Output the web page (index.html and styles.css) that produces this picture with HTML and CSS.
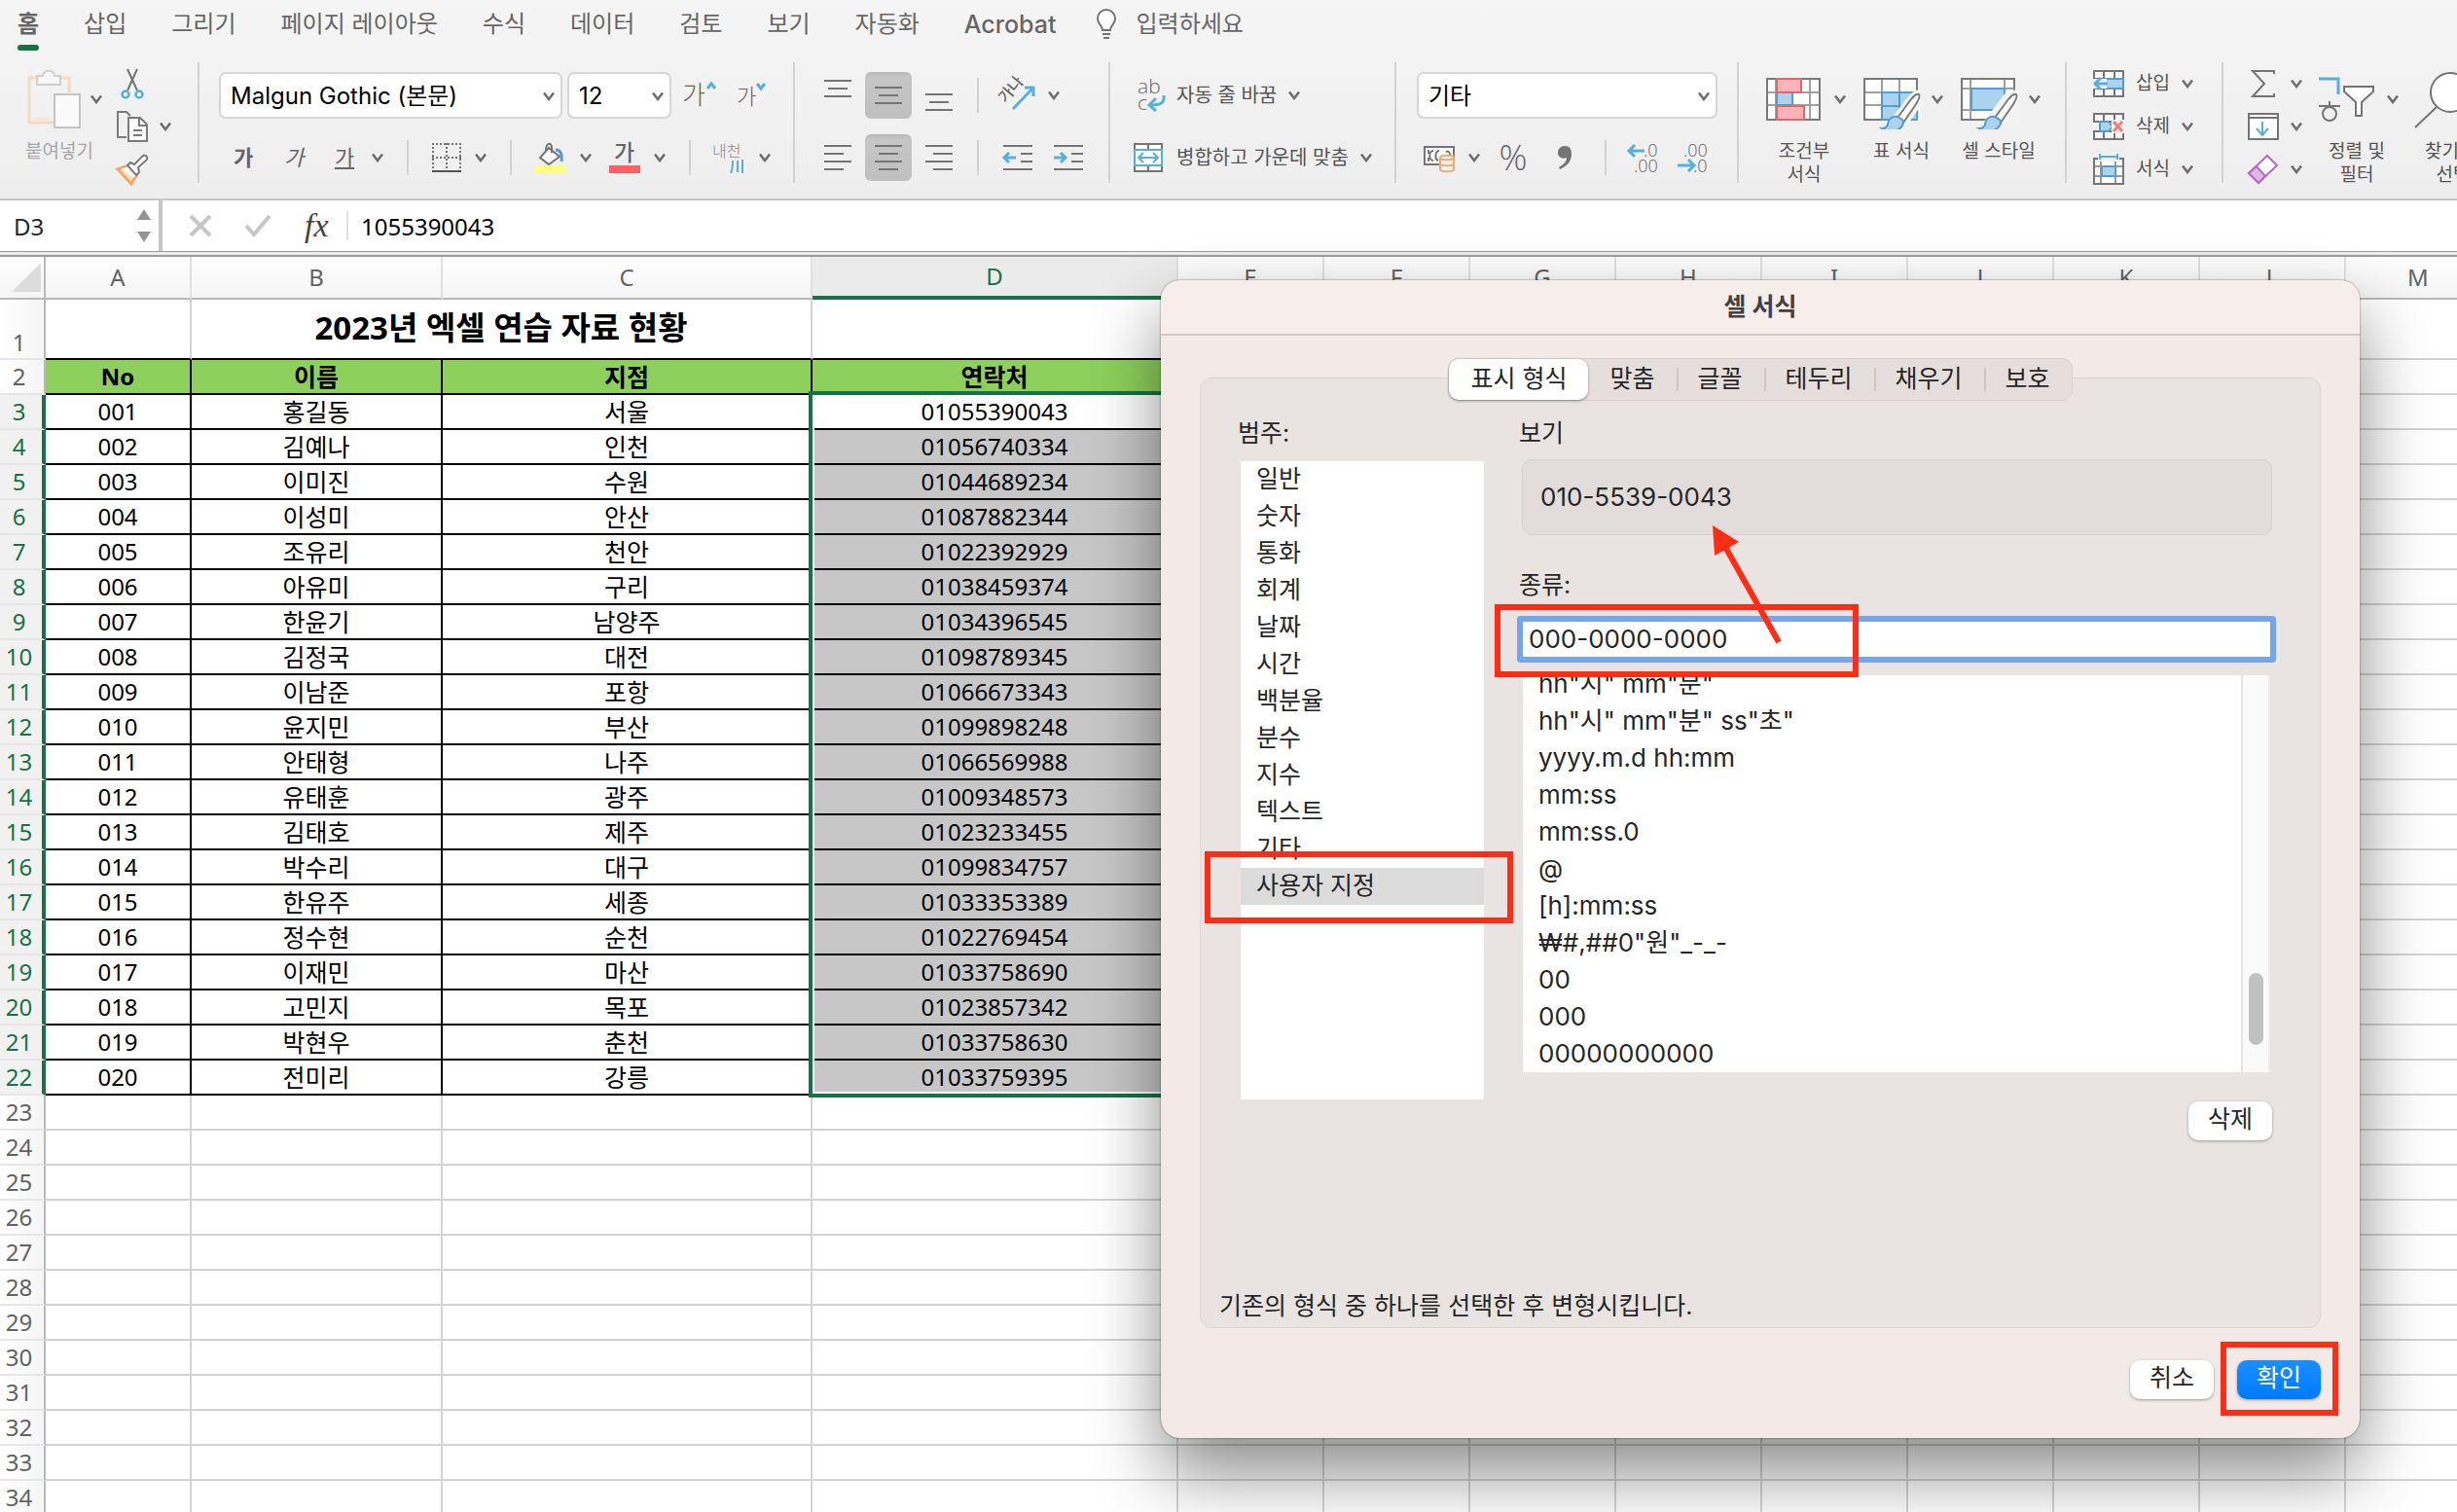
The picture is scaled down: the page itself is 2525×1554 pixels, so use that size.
FILE: index.html
```html
<!DOCTYPE html>
<html lang="ko">
<head>
    <meta charset="utf-8">
    <title>셀 서식</title>
    <link rel="stylesheet" href="styles.css">
</head>
<body>
    <!-- shared icons -->
    <svg width="0" height="0" class="defs">
        <symbol id="chev" viewBox="0 0 12 10"><path d="M1 1.5 6 8l5-6.5" fill="none" stroke="#6e6e6e" stroke-width="2.6"/></symbol>
        <symbol id="brush" viewBox="0 0 46 60">
            <path d="M44 23c-3-1-7 2-12 9L19 49l8 6 12-17c5-7 7-12 5-15z" fill="#fff" stroke="#f3f3f3" stroke-width="7"/>
            <path d="M43 24c-3-1-6 2-11 9L21 48l6 5 11-16c4-6 7-11 5-13z" fill="#fff" stroke="#7a7a7a" stroke-width="2"/>
            <path d="M21 47c-7-1-10 4-10 8-1 3-3 4-6 4 5 3 12 4 17 1 5-3 6-8 4-10z" fill="#abd3f0" stroke="#569bcd" stroke-width="2"/>
        </symbol>
    </svg>

    <header class="ribbon">
        <nav class="tabs">
            <button class="tab active">홈</button>
            <button class="tab">삽입</button>
            <button class="tab">그리기</button>
            <button class="tab">페이지 레이아웃</button>
            <button class="tab">수식</button>
            <button class="tab">데이터</button>
            <button class="tab">검토</button>
            <button class="tab">보기</button>
            <button class="tab">자동화</button>
            <button class="tab latin-tab">Acrobat</button>
            <button class="tab tell-me">
                <svg width="22" height="32" viewBox="0 0 22 32" fill="none" stroke="#737373" stroke-width="2"><path d="M7 22c0-5-5-6-5-12a9 9 0 0 1 18 0c0 6-5 7-5 12z" fill="#fff"/><path d="M7 26h8M8 30h6"/></svg>
                입력하세요
            </button>
        </nav>

        <div class="tools">
            <!-- clipboard -->
            <div class="group clipboard">
                <button class="big paste">
                    <span class="big-icon">
                        <svg width="57" height="60" viewBox="-3 0 57 60" fill="none" stroke-width="2"><path d="M9 8H1v46h25M33 8h9v15" stroke="#f5d9c3" stroke-width="3"/><path d="M4 50h20" stroke="#f7ead8" stroke-width="4"/><path d="M9 6h6c1-7 11-7 12 0h6v9H9z" fill="#f8f8f8" stroke="#cfcfcf"/><path d="M27 25h26v34H27z" fill="#fafafa" stroke="#c4c4c4"/></svg>
                        <svg class="chev"><use href="#chev"/></svg>
                    </span>
                    <span class="big-label">붙여넣기</span>
                </button>
                <div class="stack">
                    <button class="tool"><svg width="32" height="32" viewBox="0 0 32 32" fill="none" stroke-width="2"><path d="M11 1l10 22M21 1L11 23" stroke="#737373"/><circle cx="9" cy="27" r="3.5" stroke="#56b0dd" stroke-width="2.5"/><circle cx="23" cy="27" r="3.5" stroke="#56b0dd" stroke-width="2.5"/></svg></button>
                    <button class="tool"><svg width="32" height="32" viewBox="0 0 32 32" fill="none" stroke="#7a7a7a" stroke-width="2"><path d="M10 27H1V1h9l4 4"/><path d="M12 7h12l7 7v17H12z" fill="#fff"/><path d="M23 7v8h8M17 20h9M17 25h9"/></svg><svg class="chev"><use href="#chev"/></svg></button>
                    <button class="tool"><svg width="32" height="32" viewBox="0 0 32 32" fill="none" stroke-width="2"><path d="M12 12l9 9-6 10L1 16z" fill="#fbe3bd" stroke="#f3a66e" stroke-width="3"/><path d="M4 15l8-3 9 9-2 4" fill="#fff" stroke="#f3a66e"/><path d="M11 12l3-3 4 2 9-9c3-1 5 1 4 4l-9 8 1 5-3 3z" fill="#fff" stroke="#7a7a7a"/></svg></button>
                </div>
            </div>
            <span class="divider"></span>

            <!-- font -->
            <div class="group font">
                <div class="row row-fields">
                    <label class="field field-font"><select aria-label="글꼴"><option>Malgun Gothic (본문)</option></select><svg class="chev"><use href="#chev"/></svg></label>
                    <label class="field field-size"><select aria-label="글꼴 크기"><option>12</option></select><svg class="chev"><use href="#chev"/></svg></label>
                    <button class="tool"><svg width="50" height="30" viewBox="0 0 50 30"><text x="6" y="24" font-size="26" class="glyph">가</text><path d="M32 8l4-5 4 5" class="blue"/></svg></button>
                    <button class="tool"><svg width="50" height="30" viewBox="0 0 50 30"><text x="7" y="24" font-size="22" class="glyph">가</text><path d="M28 3l4 5 4-5" class="blue"/></svg></button>
                </div>
                <div class="row row-font">
                    <button class="tool letter bold">가</button>
                    <button class="tool letter italic">가</button>
                    <button class="tool"><span class="letter"><u>가</u></span><svg class="chev"><use href="#chev"/></svg></button>
                    <span class="sep"></span>
                    <button class="tool"><svg width="30" height="32" viewBox="0 0 30 32" fill="none" stroke="#757575" stroke-width="2"><path d="M0 2h30M0 16h30M1 1v26M15 1v26M29 1v26" stroke-dasharray="2 2"/><path d="M0 30h30" stroke="#555"/></svg><svg class="chev"><use href="#chev"/></svg></button>
                    <span class="sep"></span>
                    <button class="tool"><svg width="32" height="32" viewBox="0 0 32 32" fill="none" stroke="#737373" stroke-width="2"><path d="M14 6l11 9-11 8-9-7z" fill="#fff"/><path d="M11 9c0-9 6-9 6-3v5"/><path d="M21 8c5 0 7 4 6 12" stroke="#569bcd" stroke-width="3"/><path d="M0 24h32v8H0z" fill="#ffff80" stroke="none"/></svg><svg class="chev"><use href="#chev"/></svg></button>
                    <button class="tool"><svg width="32" height="32" viewBox="0 0 32 32"><text x="5" y="19" font-size="23" class="glyph strong">가</text><path d="M0 24h32v8H0z" fill="#ff6066"/></svg><svg class="chev"><use href="#chev"/></svg></button>
                    <span class="sep"></span>
                    <button class="tool"><svg width="32" height="34" viewBox="2 0 32 34"><text x="0" y="16" font-size="16" class="glyph light">내천</text><path d="M21 20c0 6 0 9-2 13M26 20v12M31 19v14" class="blue thin"/></svg><svg class="chev"><use href="#chev"/></svg></button>
                </div>
            </div>
            <span class="divider"></span>

            <!-- alignment -->
            <div class="group align">
                <div class="row">
                    <button class="tool"><svg class="lines" width="28" height="32" viewBox="0 0 28 32"><path d="M0 1h28M4 9h20M0 17h28"/></svg></button>
                    <button class="tool pressed"><svg class="lines" width="28" height="32" viewBox="0 0 28 32"><path d="M0 8h28M4 16h20M0 24h28"/></svg></button>
                    <button class="tool"><svg class="lines" width="28" height="32" viewBox="0 0 28 32"><path d="M0 15h28M4 23h20M0 31h28"/></svg></button>
                    <span class="sep"></span>
                    <button class="tool"><svg width="32" height="32" viewBox="0 0 32 32"><text x="-3" y="19" font-size="16" class="glyph strong" transform="rotate(-50 6 16)">가나</text><path d="M10 30L30 9M22 8h9v9" class="blue"/></svg><svg class="chev"><use href="#chev"/></svg></button>
                </div>
                <div class="row">
                    <button class="tool"><svg class="lines" width="28" height="26" viewBox="0 0 28 26"><path d="M0 1h28M0 9h20M0 17h28M0 25h20"/></svg></button>
                    <button class="tool pressed"><svg class="lines" width="28" height="26" viewBox="0 0 28 26"><path d="M0 1h28M4 9h20M0 17h28M4 25h20"/></svg></button>
                    <button class="tool"><svg class="lines" width="28" height="26" viewBox="0 0 28 26"><path d="M0 1h28M8 9h20M0 17h28M8 25h20"/></svg></button>
                    <span class="sep"></span>
                    <button class="tool outdent"><svg class="lines" width="30" height="26" viewBox="0 0 30 26"><path d="M0 1h30M18 9h12M18 17h12M0 25h30"/><path d="M13 13H1M6 8l-5 5 5 5" class="blue"/></svg></button>
                    <button class="tool"><svg class="lines" width="30" height="26" viewBox="0 0 30 26"><path d="M0 1h30M18 9h12M18 17h12M0 25h30"/><path d="M0 13h12M7 8l5 5-5 5" class="blue"/></svg></button>
                </div>
            </div>
            <span class="divider"></span>

            <!-- wrap and merge -->
            <div class="group wrap">
                <div class="row">
                    <button class="tool labelled"><svg width="32" height="34" viewBox="0 0 32 34"><text x="4" y="15" font-size="21" class="glyph latin">ab</text><text x="4" y="32" font-size="21" class="glyph latin">c</text><path d="M31 17c1 8-3 10-14 10M23 20l-7 7 7 6" class="blue"/></svg>자동 줄 바꿈<svg class="chev"><use href="#chev"/></svg></button>
                </div>
                <div class="row">
                    <button class="tool labelled"><svg width="32" height="30" viewBox="0 0 32 30" fill="none" stroke="#757575" stroke-width="2"><path d="M1 1h28v28H1z" fill="#fff"/><path d="M15 1v28"/><path d="M1 7h28v16H1z" fill="#fff" stroke="#56b0dd"/><path d="M5 15h20M10 10l-5 5 5 5M20 10l5 5-5 5" stroke="#56b0dd"/></svg>병합하고 가운데 맞춤<svg class="chev"><use href="#chev"/></svg></button>
                </div>
            </div>
            <span class="divider"></span>

            <!-- number -->
            <div class="group number">
                <div class="row row-fields">
                    <label class="field field-format"><select aria-label="표시 형식"><option>기타</option></select><svg class="chev"><use href="#chev"/></svg></label>
                </div>
                <div class="row row-number">
                    <button class="tool"><svg width="32" height="28" viewBox="0 0 32 28" fill="none" stroke="#757575" stroke-width="2"><path d="M1 3h30v18H1z" fill="#fff"/><path d="M10 7c-5 0-5 10 0 10M15 17c-4-2-3-10 1-10M23 8c2-1 4 0 4 3M5 6v4M5 14v4"/><path d="M17 14c0-3 14-3 14 0v12c0 3-14 3-14 0z" fill="#fdf3ea" stroke="#f3a66e"/><path d="M17 14c0 3 14 3 14 0M17 20c0 3 14 3 14 0" stroke="#f3a66e"/></svg><svg class="chev"><use href="#chev"/></svg></button>
                    <button class="tool percent">%</button>
                    <button class="tool"><svg width="38" height="26" viewBox="0 0 38 26"><path d="M19 1c5 0 7 3 7 8 0 8-5 13-12 16l-1-2c5-3 8-6 8-10-5 2-9-1-9-5s3-7 7-7z" fill="#737373"/></svg></button>
                    <span class="sep"></span>
                    <button class="tool"><svg width="32" height="32" viewBox="0 0 32 32"><text x="16" y="15" font-size="18" class="glyph latin">.0</text><text x="6" y="31" font-size="18" class="glyph latin">.00</text><path d="M17 9H1M7 3L1 9l6 6" class="blue"/></svg></button>
                    <button class="tool"><svg width="32" height="32" viewBox="0 0 32 32"><text x="6" y="15" font-size="18" class="glyph latin">.00</text><text x="16" y="31" font-size="18" class="glyph latin">.0</text><path d="M0 24h17M11 18l6 6-6 6" class="blue"/></svg></button>
                </div>
            </div>
            <span class="divider"></span>

            <!-- styles -->
            <div class="group styles">
                <button class="big">
                    <span class="big-icon">
                        <svg width="60" height="56" viewBox="0 0 60 56" fill="none" stroke="#7a7a7a" stroke-width="2"><path d="M1 7h54v42H1z" fill="#fff"/><path d="M10 7v42M27 7v42M45 7v42M1 21h54M1 34h54" stroke="#a0a0a0"/><path d="M1 7h54v42H1z"/><path d="M11 21h16v13H11z" fill="#abd3f0" stroke="#569bcd"/><path d="M11 7h25v14H11zM11 35h28v14H11z" fill="#ffb3b8" stroke="#e0686b"/></svg>
                        <svg class="chev"><use href="#chev"/></svg>
                    </span>
                    <span class="big-label">조건부<br>서식</span>
                </button>
                <button class="big">
                    <span class="big-icon">
                        <svg width="60" height="56" viewBox="0 0 60 56" fill="none" stroke="#7a7a7a" stroke-width="2"><path d="M1 7h54v42H1z" fill="#fff"/><path d="M19 7v42M37 7v42M1 21h54M1 34h54" stroke="#a0a0a0"/><path d="M1 7h54v42H1z"/><path d="M19 21h36v28H19z" fill="#abd3f0" stroke="#569bcd"/><path d="M37 21v28M19 35h36" stroke="#569bcd"/><use href="#brush" x="14" y="-1" width="46" height="60"/></svg>
                        <svg class="chev"><use href="#chev"/></svg>
                    </span>
                    <span class="big-label">표 서식</span>
                </button>
                <button class="big">
                    <span class="big-icon">
                        <svg width="60" height="56" viewBox="0 0 60 56" fill="none" stroke="#7a7a7a" stroke-width="2"><path d="M1 7h54v42H1z" fill="#fff"/><path d="M10 7v42M45 7v42M1 17h54M1 39h54" stroke="#a0a0a0"/><path d="M55 17V7H1v42h20"/><path d="M11 17h34v22H11z" fill="#abd3f0" stroke="#569bcd"/><path d="M47 20h13v36H20z" fill="#f2f2f2" stroke="none"/><use href="#brush" x="14" y="-1" width="46" height="60"/></svg>
                        <svg class="chev"><use href="#chev"/></svg>
                    </span>
                    <span class="big-label">셀 스타일</span>
                </button>
            </div>
            <span class="divider"></span>

            <!-- cells -->
            <div class="group cells">
                <div class="stack">
                    <button class="tool labelled"><svg width="32" height="28" viewBox="0 0 32 28" fill="none" stroke="#757575" stroke-width="2"><path d="M1 1h30v26H1z" fill="#fff"/><path d="M11 1v26M22 1v26M1 9h30M1 19h30"/><path d="M12 9h19v10H12z" fill="#abd3f0" stroke="#569bcd"/><path d="M0 9h14v10H0z" fill="#f2f2f2" stroke="none"/><path d="M15 14H2M8 8l-6 6 6 6" stroke="#56b0dd" stroke-width="3"/></svg>삽입<svg class="chev"><use href="#chev"/></svg></button>
                    <button class="tool labelled"><svg width="32" height="28" viewBox="0 0 32 28" fill="none" stroke="#757575" stroke-width="2"><path d="M1 9V1h30v8M1 19v8h30v-8" fill="#fff"/><path d="M11 1v8M22 1v8M11 19v8M22 19v8M0 9h31M0 19h31"/><path d="M7 9h9l4 5-4 5H7z" fill="#abd3f0" stroke="#569bcd"/><path d="M19 7h13v14H19z" fill="#f2f2f2" stroke="none"/><path d="M21 9l9 10M30 9l-9 10" stroke="#f27b7b" stroke-width="3"/></svg>삭제<svg class="chev"><use href="#chev"/></svg></button>
                    <button class="tool labelled"><svg width="32" height="32" viewBox="0 0 32 32" fill="none" stroke="#757575" stroke-width="2"><path d="M1 5h30v26H1z" fill="#fff"/><path d="M8 5v26M23 5v26M1 13h30M1 23h30" stroke="#999"/><path d="M1 5v26h30V5"/><path d="M9 13h14v10H9z" fill="#abd3f0" stroke="#569bcd"/><path d="M5 0h22v8H5z" fill="#f2f2f2" stroke="none"/><path d="M7 3h18M7 0v6M25 0v6" stroke="#56b0dd"/></svg>서식<svg class="chev"><use href="#chev"/></svg></button>
                </div>
            </div>
            <span class="divider"></span>

            <!-- editing -->
            <div class="group editing">
                <div class="stack">
                    <button class="tool"><svg width="32" height="28" viewBox="0 0 32 28" fill="none" stroke="#757575" stroke-width="2"><path d="M27 4V1H5l12 13L5 27h22v-3"/></svg><svg class="chev"><use href="#chev"/></svg></button>
                    <button class="tool"><svg width="32" height="28" viewBox="0 0 32 28" fill="none" stroke="#757575" stroke-width="2"><path d="M1 1h30v26H1z" fill="#fff"/><path d="M1 5h30"/><path d="M15 9v13M9 16l6 7 6-7" stroke="#56b0dd"/></svg><svg class="chev"><use href="#chev"/></svg></button>
                    <button class="tool"><svg width="32" height="32" viewBox="0 0 32 32" fill="none" stroke="#b56cbd" stroke-width="2"><path d="M20 2l10 10-19 18L1 20z" fill="#fff"/><path d="M9 13l9 10-7 7L1 20z" fill="#e3b5e6"/></svg><svg class="chev"><use href="#chev"/></svg></button>
                </div>
                <button class="big">
                    <span class="big-icon">
                        <svg width="60" height="56" viewBox="0 0 60 56" fill="none" stroke="#757575" stroke-width="2"><path d="M0 7h20v16" stroke="#56b0dd" stroke-width="3"/><path d="M0 35h22M11 30v5"/><circle cx="11" cy="43" r="7"/><path d="M26 15h30v5L44 31v14h-6V31L26 20z" fill="#fff"/></svg>
                        <svg class="chev"><use href="#chev"/></svg>
                    </span>
                    <span class="big-label">정렬 및<br>필터</span>
                </button>
                <button class="big">
                    <span class="big-icon">
                        <svg width="60" height="56" viewBox="0 0 60 56" fill="none" stroke="#757575" stroke-width="2"><circle cx="36" cy="21" r="20" fill="#fff"/><path d="M22 36L0 57"/></svg>
                        <svg class="chev"><use href="#chev"/></svg>
                    </span>
                    <span class="big-label">찾기 및<br>선택</span>
                </button>
            </div>
        </div>
    </header>

    <div class="formula-bar">
        <div class="name-box">
            <input type="text" value="D3" aria-label="이름 상자">
            <svg width="14" height="34" viewBox="0 0 14 34" fill="#949494"><path d="M7 0l7 11H0zM0 23h14L7 34z"/></svg>
        </div>
        <button class="tool cancel"><svg width="24" height="24" viewBox="0 0 24 24" stroke="#c6c6c6" stroke-width="4"><path d="M2 2l20 20M22 2L2 22"/></svg></button>
        <button class="tool accept"><svg width="28" height="24" viewBox="0 0 28 24" fill="none" stroke="#c6c6c6" stroke-width="4"><path d="M2 12l8 9L26 2"/></svg></button>
        <button class="tool fx">fx</button>
        <input class="formula" type="text" value="1055390043" aria-label="수식">
    </div>

    <main class="sheet">
        <table class="grid">
            <colgroup>
                <col class="w-row"><col class="w-a"><col class="w-b"><col class="w-c"><col class="w-d">
                <col span="9" class="w-rest">
            </colgroup>
            <thead>
                <tr>
                    <th class="corner"><svg width="30" height="30" viewBox="0 0 30 30"><path d="M30 0v30H0z" fill="#dcdcdc"/></svg></th>
                    <th>A</th><th>B</th><th>C</th><th class="on">D</th><th>E</th><th>F</th><th>G</th><th>H</th><th>I</th><th>J</th><th>K</th><th>L</th><th>M</th>
                </tr>
            </thead>
            <tbody id="rows"></tbody>
        </table>
        <div class="selection"></div>
    </main>

    <section class="dialog" role="dialog" aria-labelledby="dialog-title">
        <h1 class="dialog-title" id="dialog-title">셀 서식</h1>
        <div class="segments">
            <button class="segment active">표시 형식</button>
            <button class="segment">맞춤</button>
            <button class="segment">글꼴</button>
            <button class="segment">테두리</button>
            <button class="segment">채우기</button>
            <button class="segment">보호</button>
        </div>
        <div class="panel">
            <div class="columns">
                <div class="categories">
                    <div class="caption" id="cat-label">범주:</div>
                    <ul class="list" role="listbox" aria-labelledby="cat-label">
                        <li role="option">일반</li>
                        <li role="option">숫자</li>
                        <li role="option">통화</li>
                        <li role="option">회계</li>
                        <li role="option">날짜</li>
                        <li role="option">시간</li>
                        <li role="option">백분율</li>
                        <li role="option">분수</li>
                        <li role="option">지수</li>
                        <li role="option">텍스트</li>
                        <li role="option">기타</li>
                        <li role="option" class="selected">사용자 지정</li>
                    </ul>
                </div>
                <div class="format">
                    <div class="caption">보기</div>
                    <div class="preview">010-5539-0043</div>
                    <label class="caption" for="code">종류:</label>
                    <input class="code" id="code" type="text" value="000-0000-0000">
                    <div class="codes">
                        <ul class="list">
                            <li>hh"시" mm"분"</li>
                            <li>hh"시" mm"분" ss"초"</li>
                            <li>yyyy.m.d hh:mm</li>
                            <li>mm:ss</li>
                            <li>mm:ss.0</li>
                            <li>@</li>
                            <li>[h]:mm:ss</li>
                            <li>₩#,##0"원"_-_-</li>
                            <li>00</li>
                            <li>000</li>
                            <li>00000000000</li>
                        </ul>
                        <div class="track"><div class="thumb"></div></div>
                    </div>
                    <button class="push remove">삭제</button>
                </div>
            </div>
            <p class="note">기존의 형식 중 하나를 선택한 후 변형시킵니다.</p>
        </div>
        <div class="actions">
            <button class="push">취소</button>
            <button class="push primary">확인</button>
        </div>
        <!-- red marks on top of the dialog -->
        <svg class="marks" viewBox="0 0 1232 1190" fill="none" stroke="#ff2c16" stroke-width="6">
            <rect x="346" y="336" width="368" height="69"/>
            <rect x="48" y="590" width="311" height="68"/>
            <rect x="1092" y="1094" width="115" height="70"/>
            <path d="M635 372L580 274"/>
            <path d="M567 252l27 17-25 14z" fill="#ff2c16" stroke="none"/>
        </svg>
    </section>

    <script src="script.js"></script>
</body>
</html>
```

FILE: styles.css
```css
* { box-sizing: border-box; }
body { margin: 0; height: 100vh; overflow: hidden; position: relative; background: #fff; font-family: Inter, "Noto Sans CJK KR", sans-serif; color: #262626; }
button, input, select { font: inherit; color: inherit; margin: 0; padding: 0; border: none; background: none; outline: none; }
svg { display: block; flex: none; overflow: visible; }
.defs { position: absolute; }
.chev { width: 12px; height: 10px; }

/* ribbon */
.ribbon { height: 206px; overflow: hidden; background: linear-gradient(#f5f5f5, #eeeeee); border-bottom: 2px solid #c6c6c6; }
.tabs { display: flex; gap: 46px; height: 64px; padding: 0 18px; font-size: 24px; color: #666; }
.tab { height: 50px; line-height: 50px; white-space: nowrap; }
.tab.active { position: relative; font-weight: bold; }
.tab.active::after { content: ""; position: absolute; left: 0; right: 0; top: 46px; height: 6px; border-radius: 3px; background: #177245; }
.latin-tab { font-size: 25px; font-weight: 500; }
.tell-me { display: flex; align-items: center; gap: 20px; margin-left: -6px; }
.tools { display: flex; }
.group { flex: none; display: flex; }
.divider { flex: none; width: 2px; height: 124px; background: #d2d2d2; }
.tool { display: flex; flex: none; align-items: center; gap: 14px; color: #666; }
.labelled { gap: 12px; font-size: 20px; line-height: 24px; color: #555; white-space: nowrap; }
.row { display: flex; align-items: center; height: 48px; gap: 14px; }
.sep { width: 2px; height: 36px; margin: 0 11px; background: #d2d2d2; }
.stack { display: grid; grid-template-rows: repeat(3, 44px); align-items: center; }
.stack .tool { gap: 12px; }
.stack .labelled { font-size: 19px; }
.big { display: flex; flex-direction: column; align-items: center; padding-top: 10px; }
.big-icon { display: flex; align-items: center; height: 56px; gap: 10px; }
.big-label { margin-top: 14px; padding-right: 4px; font-size: 19px; line-height: 24px; color: #555; white-space: nowrap; }
.glyph { font-family: "Noto Sans CJK KR", sans-serif; font-weight: 300; fill: #666; }
.glyph.strong { font-weight: 500; }
.glyph.light { fill: #888; }
.glyph.latin { font-family: "Open Sans", sans-serif; }
.blue { fill: none; stroke: #56b0dd; stroke-width: 3; }
.blue.thin { stroke-width: 2; }
.lines { fill: none; stroke: #757575; stroke-width: 2; }
.pressed { justify-content: center; width: 48px; height: 48px; border-radius: 6px; background: linear-gradient(#b8b8b8, #c6c6c6 12%, #bfbfbf); }

.clipboard { width: 203px; padding-left: 26px; gap: 15px; }
.paste { align-items: flex-start; }
.paste .big-label { color: #a8a8a8; }
.font, .align, .wrap, .number { flex-direction: column; padding-top: 10px; gap: 16px; }
.font { width: 610px; padding-left: 20px; }
.align { width: 322px; padding-left: 30px; }
.wrap { width: 292px; padding-left: 24px; }
.number { width: 350px; padding-left: 21px; }
.styles { width: 335px; padding-left: 28px; gap: 18px; align-items: flex-start; }
.cells { width: 159px; padding-left: 27px; }
.editing { padding-left: 25px; gap: 17px; align-items: flex-start; }
.row-fields { gap: 5px; }
.row-font { gap: 18px; padding-left: 11px; }
.row-font .sep { margin: 0 6px; }
.row-number { gap: 19px; padding-left: 7px; }
.row-number .sep { margin: 0 3px; }
.outdent { margin-right: 8px; }
.letter { width: 28px; font-size: 22px; line-height: 28px; justify-content: center; text-align: center; }
.bold { font-weight: bold; margin-right: 6px; }
.italic { font-style: italic; margin-right: 6px; }
.percent { width: 30px; justify-content: center; font-family: "Open Sans", sans-serif; font-weight: 300; font-size: 36px; line-height: 48px; }
.field { position: relative; height: 48px; border: 2px solid #d6d6d6; border-radius: 7px; background: #fff; }
.field select { appearance: none; width: 100%; height: 100%; padding-left: 10px; font-size: 24px; color: #000; }
.field .chev { position: absolute; right: 6px; top: 18px; pointer-events: none; }
.field-font { width: 353px; }
.field-size { width: 107px; }
.field-format { width: 309px; }

/* formula bar */
.formula-bar { display: flex; align-items: center; height: 58px; padding-bottom: 6px; background: linear-gradient(#fff 52px, #9b9b9b 52px, #9b9b9b 53px, #ededed 53px, #ededed 56px, #9b9b9b 56px); font-family: "Noto Sans", sans-serif; font-size: 24px; }
.name-box { display: flex; align-items: center; width: 167px; height: 52px; padding-right: 8px; border-right: 4px solid #c6c6c6; }
.name-box input { flex: 1; min-width: 0; padding-left: 14px; }
.cancel { margin-left: 27px; }
.accept { margin-left: 33px; }
.fx { margin-left: 34px; width: 32px; font: italic 34px "Liberation Serif", serif; color: #444; }
.formula { flex: 1; height: 30px; margin-left: 11px; padding-left: 13px; border-left: 2px solid #e0e0e0; color: #000; }

/* sheet */
.sheet { position: relative; }
.grid { table-layout: fixed; border-collapse: separate; border-spacing: 0; width: 2561px; font-family: "Noto Sans", "Noto Sans CJK KR", sans-serif; font-size: 24px; line-height: 32px; text-align: center; color: #000; }
.w-row { width: 47px; }
.w-a { width: 150px; }
.w-b { width: 258px; }
.w-c { width: 380px; }
.w-d { width: 376px; }
.w-rest { width: 150px; }
.grid th, .grid td { height: 36px; padding: 0; overflow: hidden; white-space: nowrap; border-right: 2px solid #d4d4d4; border-bottom: 2px solid #d4d4d4; }
.grid th { font-weight: normal; color: #636363; }
.grid thead th { height: 44px; background: linear-gradient(#fdfdfd, #f5f5f5); border-right-color: #e0e0e0; border-bottom-color: #b9b9b9; }
.grid thead .corner { border-right-color: #b9b9b9; }
.corner svg { margin: 0 0 0 12px; }
.grid thead .on { background: #ebebeb; color: #177245; border-bottom: 4px solid #177245; }
.grid tbody th { padding-right: 6px; background: linear-gradient(90deg, #fff, #f5f5f5); border-right-color: #b9b9b9; border-bottom-color: #e6e6e6; }
.grid tbody .on { padding-right: 4px; background: #f1f1f1; color: #177245; border-right: 4px solid #177245; }
.grid .first th, .grid .first td { height: 62px; border-bottom-color: #000; }
.grid .first th { vertical-align: bottom; border-bottom-color: #e6e6e6; }
.grid .first .plain { border-bottom-color: #d4d4d4; }
.grid .title { padding-bottom: 2px; font-size: 33px; font-weight: bold; }
.grid .head { background: #8dd15c; font-weight: bold; }
.grid .box { border-color: #000; }
.grid .ko { font-size: 25px; }
.grid .picked { background: #c7c7c7; }
.selection { position: absolute; left: 831px; top: 138px; width: 382px; height: 726px; border: 4px solid #177245; box-shadow: inset 0 0 0 2px #fff; }

/* dialog window */
.dialog { position: absolute; left: 1193px; top: 288px; width: 1232px; padding-bottom: 40px; border-radius: 20px; background: #f3eae8; font-size: 25px; line-height: 38px; box-shadow: 0 0 2px rgba(0, 0, 0, .6), 0 36px 72px rgba(0, 0, 0, .46); }
.dialog-title { margin: 0; height: 57px; line-height: 54px; text-align: center; font-size: 25px; font-weight: bold; color: #434040; border-bottom: 2px solid #d3c9c7; border-radius: 20px 20px 0 0; background: #f7eeec; }
.segments { position: relative; display: flex; width: max-content; margin: 23px auto 0; height: 44px; border: 1px solid #d9d2cf; border-radius: 11px; background: #e6dedc; }
.segment { position: relative; padding: 0 22px 3px; white-space: nowrap; }
.segment + .segment::before { content: ""; position: absolute; left: 0; top: 9px; width: 2px; height: 24px; background: #cfc7c5; }
.segment.active { border-radius: 10px; background: #fff; box-shadow: 0 1px 3px rgba(0, 0, 0, .4); }
.segment.active + .segment::before { display: none; }
.panel { display: flex; flex-direction: column; min-height: 977px; margin: -24px 40px 0; padding: 37px 49px 3px 19px; border: 1px solid #dcd7d4; border-radius: 12px; background: #e9e4e1; }
.columns { display: flex; gap: 36px; padding-left: 19px; }
.caption { display: block; height: 38px; }
.list { margin: 0; padding: 0; list-style: none; background: #fff; }
.list li { height: 38px; padding-left: 16px; line-height: 37px; white-space: nowrap; }
.list .selected { background: #dcdcdc; }
.categories { width: 253px; }
.categories .list { height: 656px; margin: 10px 0 0 3px; }
.format { flex: 1; }
.preview { height: 78px; margin: 8px 0 32px 3px; padding-left: 18px; font-size: 26px; line-height: 76px; border: 1px solid #d7d2cf; border-radius: 10px; background: #e2ddda; }
.code { display: block; width: calc(100% - 6px); height: 36px; margin: 19px 0 19px 4px; padding-left: 6px; font-size: 26px; background: #fff; box-shadow: 0 0 0 6px #75a5ea; border-radius: 1px; }
.codes { display: flex; align-items: flex-end; height: 408px; margin: 0 2px 0 4px; overflow: hidden; background: #fff; font-size: 26px; }
.codes .list { flex: 1; }
.track { width: 30px; height: 100%; padding: 306px 5px 0 6px; border-left: 2px solid #e6e6e6; border-right: 2px solid #eee; background: #fafafa; }
.thumb { height: 74px; border-radius: 8px; background: #c1c1c1; }
.push { width: 86px; height: 40px; padding-bottom: 4px; line-height: 34px; border-radius: 10px; background: #fff; box-shadow: 0 1px 3px rgba(0, 0, 0, .35); }
.primary { color: #fff; background: linear-gradient(#1a8fff, #007aff); }
.remove { display: block; margin: 30px 0 0 auto; }
.note { margin: auto 0 0; }
.actions { display: flex; justify-content: flex-end; gap: 24px; margin: 33px 40px 0; }
.marks { position: absolute; left: 0; top: 0; width: 100%; height: 100%; pointer-events: none; }
```

FILE: script.js
```javascript
var people = [
    ['홍길동', '서울', '01055390043'],
    ['김예나', '인천', '01056740334'],
    ['이미진', '수원', '01044689234'],
    ['이성미', '안산', '01087882344'],
    ['조유리', '천안', '01022392929'],
    ['아유미', '구리', '01038459374'],
    ['한윤기', '남양주', '01034396545'],
    ['김정국', '대전', '01098789345'],
    ['이남준', '포항', '01066673343'],
    ['윤지민', '부산', '01099898248'],
    ['안태형', '나주', '01066569988'],
    ['유태훈', '광주', '01009348573'],
    ['김태호', '제주', '01023233455'],
    ['박수리', '대구', '01099834757'],
    ['한유주', '세종', '01033353389'],
    ['정수현', '순천', '01022769454'],
    ['이재민', '마산', '01033758690'],
    ['고민지', '목포', '01023857342'],
    ['박현우', '춘천', '01033758630'],
    ['전미리', '강릉', '01033759395']
];

function blanks(n, cls) {
    return ('<td class="' + (cls || '') + '"></td>').repeat(n);
}

var html = '<tr class="first"><th>1</th><td></td><td class="title" colspan="2">2023년 엑셀 연습 자료 현황</td><td></td>' + blanks(9, 'plain') + '</tr>';
html += '<tr><th>2</th><td class="head box">No</td><td class="head box ko">이름</td><td class="head box ko">지점</td><td class="head box ko">연락처</td>' + blanks(9) + '</tr>';

people.forEach(function (p, i) {
    var no = String(i + 1).padStart(3, '0');
    html += '<tr><th class="on">' + (i + 3) + '</th><td class="box">' + no + '</td><td class="box ko">' + p[0] + '</td><td class="box ko">' + p[1] +
        '</td><td class="box' + (i ? ' picked' : '') + '">' + p[2] + '</td>' + blanks(9) + '</tr>';
});

for (var r = 23; r <= 34; r++) {
    html += '<tr><th>' + r + '</th>' + blanks(13) + '</tr>';
}

document.getElementById('rows').innerHTML = html;
```
